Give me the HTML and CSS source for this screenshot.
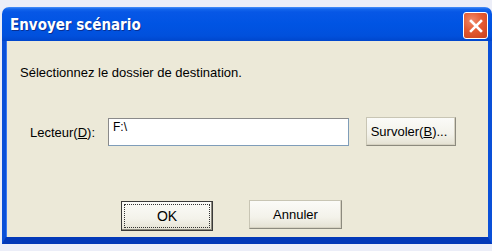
FILE: index.html
```html
<!DOCTYPE html>
<html>
<head>
<meta charset="utf-8">
<link rel="stylesheet" href="styles.css">
</head>
<body>
<div class="window">
  <div class="titlebar">
    <span class="title">Envoyer scénario</span>
    <span class="close">
      <svg width="16" height="16" viewBox="0 0 16 16"><path d="M3 3 L13 13 M13 3 L3 13" stroke="#fff" stroke-width="2.6" stroke-linecap="square"/></svg>
    </span>
  </div>
  <div class="frame">
    <p class="msg">Sélectionnez le dossier de destination.</p>
    <div class="row">
      <label class="lbl">Lecteur(<u>D</u>):</label>
      <div class="input">F:\</div>
      <button class="btn browse">Survoler(<u>B</u>)...</button>
    </div>
    <div class="actions">
      <button class="btn ok"><span class="focus">OK</span></button>
      <button class="btn cancel">Annuler</button>
    </div>
  </div>
</div>
</body>
</html>
```
FILE: styles.css
```css
html, body {
  margin: 0;
  padding: 0;
}
body {
  background: #eceef8;
  width: 492px;
  height: 251px;
  overflow: hidden;
  font-family: "Liberation Sans", Arial, sans-serif;
  font-size: 13px;
  color: #000;
}
.window {
  margin: 7px 0 0 2px;
  width: 490px;
}
.titlebar {
  height: 34px;
  border-radius: 7px 7px 0 0;
  background: linear-gradient(#4a90f8 0, #1466ec 2px, #0757e6 5px, #0054e3 50%, #0150dc 85%, #0046cc 100%);
  display: flex;
  align-items: center;
  justify-content: space-between;
  padding: 0 4px 0 8px;
}
.title {
  color: #fff;
  font-family: "DejaVu Sans Condensed", "DejaVu Sans", sans-serif;
  font-weight: bold;
  font-size: 15px;
  text-shadow: 1px 1px 0 #0a2f90;
  margin-top: 1px;
}
.close {
  width: 23px;
  height: 25px;
  margin-top: 3px;
  border: 1px solid #fff;
  border-radius: 3px;
  background: radial-gradient(circle at 35% 30%, #f08a6a 0, #e45a32 45%, #c8401c 100%);
  display: flex;
  align-items: center;
  justify-content: center;
}
.frame {
  background: #ece9d8;
  border-left: 4px solid #0a50d8;
  border-right: 4px solid #0a50d8;
  border-bottom: 7px solid #0339b8;
  height: 203px;
  box-sizing: border-box;
  display: flex;
  flex-direction: column;
  padding: 0 0 0 14px;
  box-shadow: inset 1px 0 0 #3a78f0;
}
.msg {
  margin: 24px 0 0 0;
  line-height: 16px;
}
.row {
  display: flex;
  align-items: center;
  margin-top: 36px;
  height: 29px;
}
.lbl {
  margin-left: 10px;
  width: 78px;
  padding-top: 2px;
}
.input {
  background: #fff;
  border: 1px solid #7f9db9;
  border-top-color: #8a8a8a;
  border-left-color: #8a8a8a;
  padding: 2px 4px;
  box-sizing: content-box;
  width: 231px;
  height: 22px;
  line-height: 12px;
  font-size: 12px;
}
.btn {
  font-family: "Liberation Sans", Arial, sans-serif;
  font-size: 13px;
  color: #000;
  background: linear-gradient(#fbfbf8 0, #f3f2ea 60%, #e4e1d2 100%);
  border: 1px solid #c8c5b4;
  border-right-color: #8c8a7e;
  border-bottom-color: #8c8a7e;
  box-shadow: inset -1px -1px 0 #d6d2c2;
  border-radius: 0;
  padding: 0;
  display: flex;
  align-items: center;
  justify-content: center;
}
.browse {
  margin-left: 17px;
  width: 90px;
  height: 29px;
  padding-right: 4px;
}
.actions {
  display: flex;
  align-items: flex-start;
  margin: 54px 0 0 101px;
}
.ok {
  width: 92px;
  height: 30px;
  border: 1px solid #3a3a3a;
  box-shadow: inset -1px -1px 0 #8c8a7e;
  margin-top: 1px;
}
.focus {
  display: flex;
  align-items: center;
  justify-content: center;
  width: 86px;
  height: 24px;
  border: 1px dotted #333;
  box-sizing: border-box;
  font-size: 14px;
}
.cancel {
  margin-left: 36px;
  width: 93px;
  height: 29px;
}
u {
  text-decoration: underline;
}
```
